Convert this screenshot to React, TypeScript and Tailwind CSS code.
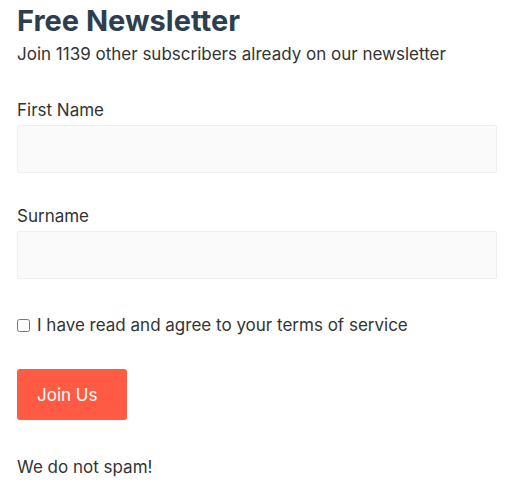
export default function App() {
    return (
        <div className="px-[17px] pt-[3px] font-['Inter','Liberation_Sans',sans-serif] text-[#333333]">
            <h2 className="text-[29px] font-bold leading-[36px] text-[#2c3e50]">Free Newsletter</h2>
            <p className="mt-[3px] text-[17px] leading-[24px]">Join 1139 other subscribers already on our newsletter</p>

            <form className="mt-[31px] w-[480px]" onSubmit={(e) => e.preventDefault()}>
                <div className="flex flex-col">
                    <label className="text-[17px] leading-[26px]">First Name</label>
                    <input
                        type="text"
                        className="mt-[2px] h-[48px] rounded-[2px] border border-[#eeeeee] bg-[#fafafa] px-3 outline-none"
                    />
                </div>
                <div className="mt-[30px] flex flex-col">
                    <label className="text-[17px] leading-[26px]">Surname</label>
                    <input
                        type="text"
                        className="mt-[2px] h-[48px] rounded-[2px] border border-[#eeeeee] bg-[#fafafa] px-3 outline-none"
                    />
                </div>
                <label className="mt-[34px] flex items-center gap-[7px] text-[17px] leading-[24px]">
                    <input type="checkbox" className="h-[13px] w-[13px]" />
                    I have read and agree to your terms of service
                </label>
                <button
                    type="submit"
                    className="mt-[32px] h-[51px] w-[110px] rounded-[3px] bg-[#ff5a43] pl-[20px] pt-[2px] text-left text-[17px] text-white"
                >
                    Join Us
                </button>
            </form>

            <p className="mt-[35px] text-[17px] leading-[24px]">We do not spam!</p>
        </div>
    );
}
